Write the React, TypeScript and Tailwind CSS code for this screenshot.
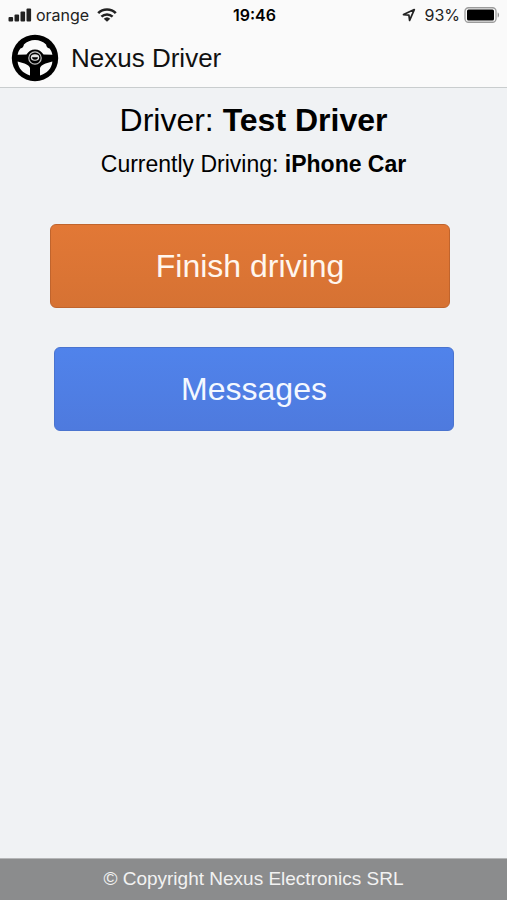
import React from 'react';

const SignalIcon = () => (
  <svg width="24" height="14" viewBox="0 0 24 14" fill="currentColor" aria-hidden="true">
    <rect x="0.5" y="9" width="4.6" height="4.5" rx="1" />
    <rect x="6.5" y="6.5" width="4.6" height="7" rx="1" />
    <rect x="12.5" y="3.5" width="4.6" height="10" rx="1" />
    <rect x="18.5" y="0.5" width="4.6" height="13" rx="1" />
  </svg>
);

const WifiIcon = () => (
  <svg width="20" height="14" viewBox="0 0 20 14" fill="none" stroke="currentColor" aria-hidden="true">
    <path d="M1.2 5.1a12.6 12.6 0 0 1 17.6 0" strokeWidth="2.7" />
    <path d="M4.4 8.7a8 8 0 0 1 11.2 0" strokeWidth="2.5" />
    <path d="M10 13.8 6.7 10.8a4.8 4.8 0 0 1 6.6 0Z" fill="currentColor" stroke="none" />
  </svg>
);

const LocationIcon = () => (
  <svg width="14" height="14" viewBox="0 0 14 14" fill="none" stroke="currentColor" aria-hidden="true">
    <path d="M1.5 6.6 12.3 1.6 7.6 12.4 6.9 7.2Z" strokeWidth="1.7" strokeLinejoin="round" />
  </svg>
);

const BatteryIcon = () => (
  <svg width="37" height="16" viewBox="0 0 37 16" aria-hidden="true">
    <rect x="1" y="0.75" width="31" height="14.5" rx="3.5" fill="#fafafa" stroke="#9b9b9b" strokeWidth="1.3" />
    <rect x="3" y="2.5" width="27" height="11" rx="1.5" fill="#000" />
    <path d="M33.7 5.5c1.8.6 1.8 4.4 0 5Z" fill="#8f8f8f" />
  </svg>
);

const SteeringWheelIcon = () => (
  <svg width="48" height="48" viewBox="0 0 48 48" aria-hidden="true">
    <circle cx="24" cy="24" r="23.2" fill="#000" />
    {/* upper opening, narrowed at the grips */}
    <path
      d="M6.6 20.8C7.1 18 8.3 16 9.4 14.6c2.2-.5 3.2-1.6 3.5-4C16 7.6 19.7 6 24 6S32 7.6 35.1 10.6c.3 2.4 1.3 3.5 3.5 4 1.1 1.4 2.3 3.4 2.8 6.2L32.5 20.5C30.6 17.2 27.5 15.4 24 15.4S17.4 17.2 15.5 20.5Z"
      fill="#fafafa"
    />
    {/* lower openings on both sides of the column */}
    <path d="M6.6 27.6 13.5 29.4C16.5 30.5 18.6 32 19 34v7.4C12 39.6 7.2 34.5 6.6 27.6Z" fill="#fafafa" />
    <path d="M41.4 27.6 34.5 29.4C31.5 30.5 29.4 32 29 34v7.4C36 39.6 40.8 34.5 41.4 27.6Z" fill="#fafafa" />
    <circle cx="24" cy="24" r="6.2" fill="none" stroke="#c4c4c4" strokeWidth="1.2" />
    <ellipse cx="24" cy="23.5" rx="4.2" ry="3.3" fill="#e4e4e4" />
    <path d="M21 23.3h6c-.3 1.8-1.4 2.5-3 2.5s-2.7-.7-3-2.5Z" fill="#000" />
  </svg>
);

const StatusBar = () => (
  <div className="grid grid-cols-3 items-center h-[30px] pl-2 pr-1.5 font-[Inter,sans-serif] text-base text-[#222]">
    <div className="flex items-center">
      <SignalIcon />
      <span className="ml-1 mr-2">orange</span>
      <WifiIcon />
    </div>
    <span className="text-center font-semibold text-black">19:46</span>
    <div className="flex items-center justify-end">
      <LocationIcon />
      <span className="ml-2 mr-1">93%</span>
      <BatteryIcon />
    </div>
  </div>
);

const App: React.FC = () => {
  return (
    <div className="flex flex-col min-h-screen bg-[#f0f2f4] font-['Liberation_Sans',Arial,sans-serif] text-black">
      <header className="bg-[#fafafa] border-b border-[#c9cdce]">
        <StatusBar />
        <div className="flex items-center h-[57px] px-[11px] pb-px">
          <SteeringWheelIcon />
          <h1 className="ml-3 text-[26px] leading-8 text-[#111]">Nexus Driver</h1>
        </div>
      </header>

      <main className="flex-1 pt-3">
        <h2 className="text-center text-[32px] leading-10">
          Driver: <strong>Test Driver</strong>
        </h2>
        <p className="mt-2 text-center text-[23px] leading-8">
          Currently Driving: <strong>iPhone Car</strong>
        </p>

        {/* Actions */}
        <div className="flex flex-col mt-11 gap-[39px]">
          <button
            type="button"
            className="h-[84px] ml-[50px] mr-[57px] rounded-md border border-[#c0642d] bg-linear-to-b from-[#e27836] to-[#d67233] text-[32px] text-[#fff6ee]"
          >
            Finish driving
          </button>
          <button
            type="button"
            className="h-[84px] ml-[54px] mr-[53px] rounded-md border border-[#4a74cf] bg-linear-to-b from-[#5083eb] to-[#4e7ade] text-[32px] text-[#f4f8ff]"
          >
            Messages
          </button>
        </div>
      </main>

      <footer className="h-[42px] border-t border-[#b5b6b7] bg-[#8b8c8d] text-center text-[19px] leading-10 text-[#f2f2f2]">
        © Copyright Nexus Electronics SRL
      </footer>
    </div>
  );
};

export default App;
